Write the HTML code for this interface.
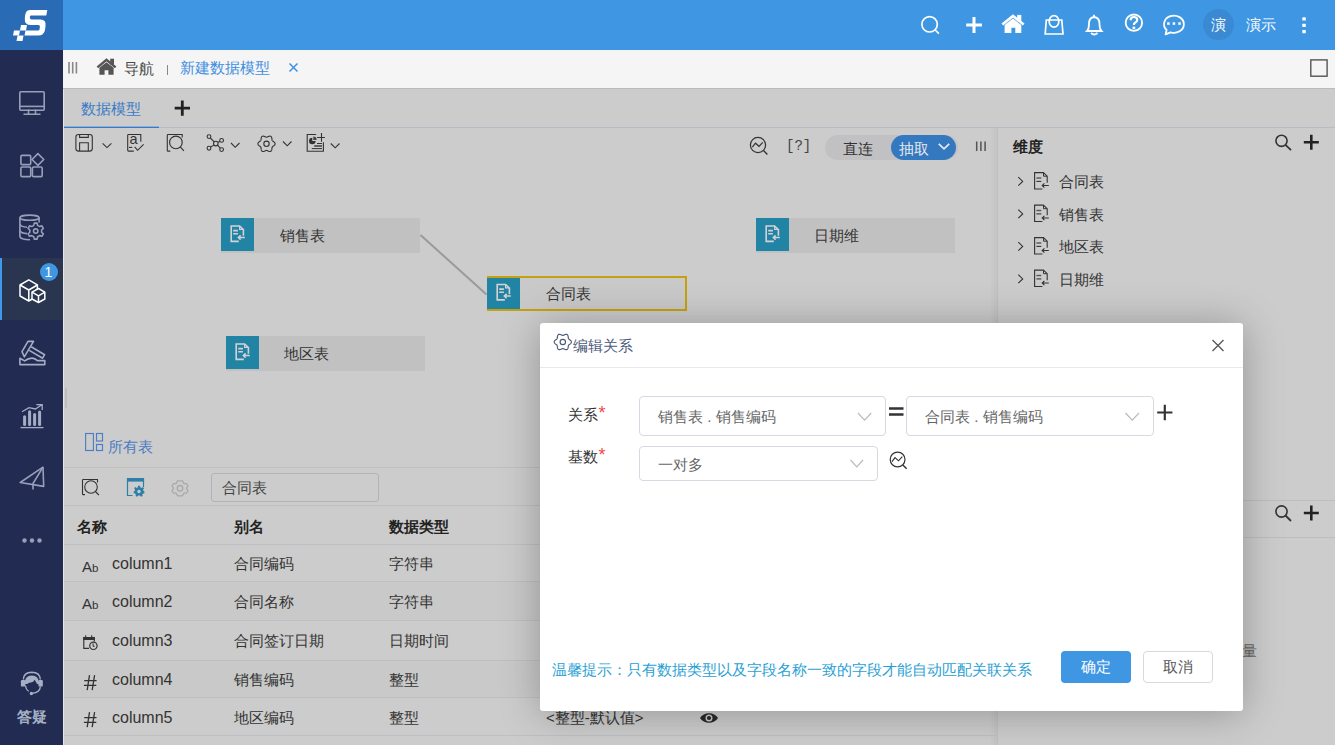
<!DOCTYPE html>
<html><head><meta charset="utf-8">
<style>
*{margin:0;padding:0;box-sizing:border-box}
html,body{width:1335px;height:745px;overflow:hidden;font-family:"Liberation Sans",sans-serif;font-size:15px;color:#333;background:#fff}
.a{position:absolute}
svg{position:absolute;overflow:visible}
#logo{left:0;top:0;width:63px;height:50px;background:#2a6bb6}
#hdr{left:63px;top:0;width:1272px;height:50px;background:#3f97e3}
#side{left:0;top:50px;width:63px;height:695px;background:#222b52}
#crumb{left:63px;top:50px;width:1272px;height:39px;background:#f5f5f5;border-bottom:1px solid #bbbbbb}
#main{left:63px;top:88px;width:1272px;height:657px;background:#fff;border-left:1px solid #e9e9e9}
#mask{left:63px;top:88px;width:1272px;height:657px;background:rgba(0,0,0,0.2)}
#modal{left:540px;top:323px;width:703px;height:388px;background:#fff;border-radius:3px;box-shadow:0 0 30px rgba(0,0,0,0.3)}
.t{position:absolute;white-space:nowrap;line-height:1}
</style></head><body>
<div id="logo" class="a">
<svg width="63" height="50" viewBox="0 0 63 50" style="left:0;top:0">
 <g fill="#fff">
  <path d="M29.5 10 L47.3 10 L46.3 15.5 L31 15.5 Q29.8 15.5 29.8 17 Q29.8 19.5 31.5 19.5 L40.5 19.5 Q46.5 19.5 45.5 26 L45 30 Q44 35.6 38 35.6 L24.5 35.6 L25.5 30.5 L38 30.5 Q39.5 30.5 39.6 29 L39.9 26.5 Q40 25 38.5 25 L31 25 Q24.5 25 24.8 19 L25 16 Q25.8 10 29.5 10 Z"/>
  <path d="M14 30.5 L20 30.5 L19 35.6 L13 35.6 Z"/>
  <path d="M21 25 L27 25 L26 30.5 L20 30.5 Z"/>
  <path d="M17.5 35.6 L23.5 35.6 L22.5 41 L16.5 41 Z"/>
 </g>
</svg>
</div>
<div id="hdr" class="a"></div>
<!-- header icons -->
<svg width="1335" height="50" style="left:0;top:0" fill="none" stroke="#fff" stroke-width="2">
 <circle cx="929.6" cy="24.3" r="7.7" stroke-width="1.7"/><path d="M935.2 30 L938.9 33.6" stroke-width="1.7"/>
 <path d="M974 17 V33 M966.2 25 H981.9" stroke-width="3"/>
 <path d="M1002.3 24.6 L1013 16 L1023.7 24.6" stroke-width="2.6" stroke-linejoin="miter"/>
 <path d="M1004.6 25 L1013 18.6 L1021.3 25 V33 H1015.3 V27.8 H1011.4 V33 H1004.6 Z" fill="#fff" stroke="none"/>
 <rect x="1017.2" y="14.9" width="4.1" height="6.5" fill="#fff" stroke="none"/>
 <path d="M1046.3 20 H1061.8 L1063 34 H1045.2 Z" stroke-width="1.7"/>
 <ellipse cx="1054" cy="21.4" rx="4.8" ry="5.8" stroke-width="1.7"/>
 <path d="M1087 31 Q1089 29 1089 24 Q1089 17.5 1094 17 Q1099.5 17.5 1099.5 24 Q1099.5 29 1101.5 31 Z" stroke-width="1.8"/>
 <path d="M1094 14.8 V17" stroke-width="1.8"/>
 <path d="M1091 33 Q1094.2 36 1097.5 33" stroke-width="1.8"/>
 <circle cx="1133.9" cy="22.7" r="8.2" stroke-width="1.9"/>
 <path d="M1130.6 20.3 Q1130.6 17 1133.9 17 Q1137.2 17 1137.2 19.9 Q1137.2 21.6 1135 22.8 Q1133.9 23.4 1133.9 25" stroke-width="2.2"/>
 <rect x="1132.6" y="26.6" width="2.6" height="2.6" fill="#fff" stroke="none"/>
 <path d="M1166.6 30 A9.9 8.6 0 1 1 1170.5 32.3 L1165.6 34.4 Z" stroke-width="1.8" stroke-linejoin="round"/>
 <rect x="1167.1" y="22.3" width="2.5" height="2.5" fill="#fff" stroke="none"/>
 <rect x="1172.7" y="22.3" width="2.5" height="2.5" fill="#fff" stroke="none"/>
 <rect x="1178.3" y="22.3" width="2.5" height="2.5" fill="#fff" stroke="none"/>
 <circle cx="1218.5" cy="24.5" r="15.5" fill="#3a89d2" stroke="none"/>
 <rect x="1302.3" y="17.3" width="3.5" height="3.3" rx="0.6" fill="#fff" stroke="none"/>
 <rect x="1302.3" y="23.7" width="3.5" height="3.3" rx="0.6" fill="#fff" stroke="none"/>
 <rect x="1302.3" y="30" width="3.5" height="3.3" rx="0.6" fill="#fff" stroke="none"/>
</svg>
<div class="t" style="left:1211px;top:17px;color:#fff;font-size:15px">演</div>
<div class="t" style="left:1246px;top:17px;color:#fff;font-size:15px">演示</div>
<div id="side" class="a"></div>
<div class="a" style="left:0;top:258px;width:63px;height:62px;background:#2a3550"></div>
<div class="a" style="left:0;top:258px;width:2px;height:62px;background:#3d9be9"></div>
<svg width="63" height="745" style="left:0;top:0" fill="none" stroke="#97a0b7" stroke-width="1.6">
 <!-- monitor -->
 <rect x="19.8" y="91.8" width="24.4" height="18.4" rx="1"/>
 <path d="M19.8 106.4 H44.2"/>
 <path d="M28.5 109.5 V114 M35.5 109.5 V114 M23.5 114.2 H40.5"/>
 <!-- apps -->
 <rect x="20.9" y="155.4" width="9.8" height="9.2" rx="1.2"/>
 <path d="M37.9 153.6 L43.8 159.5 L37.9 165.4 L32 159.5 Z" stroke-linejoin="round"/>
 <rect x="20.9" y="167" width="9.8" height="9.6" rx="1.2"/>
 <rect x="32.4" y="167" width="9.8" height="9.6" rx="1.2"/>
 <!-- db gear -->
 <ellipse cx="29.5" cy="217.7" rx="9.6" ry="2.6"/>
 <path d="M19.9 217.7 V236.5 Q20.5 239.6 30 239.8"/>
 <path d="M39.1 217.7 V222.5"/>
 <path d="M19.9 224.2 Q21 226.8 27 227.2 M19.9 230.6 Q21 233.2 27 233.6"/>
 <path d="M33.75 225.43 L34.29 223.12 L37.11 223.12 L37.65 225.43 L39.64 226.57 L41.90 225.89 L43.31 228.33 L41.59 229.96 L41.59 232.24 L43.31 233.87 L41.90 236.31 L39.64 235.63 L37.65 236.77 L37.11 239.08 L34.29 239.08 L33.75 236.77 L31.76 235.63 L29.50 236.31 L28.09 233.87 L29.81 232.24 L29.81 229.96 L28.09 228.33 L29.50 225.89 L31.76 226.57 Z" fill="#222b52" stroke-linejoin="round"/>
 <circle cx="35.7" cy="231.1" r="2.2"/>
 <!-- hammer -->
 <path d="M19.9 358.3 L24.6 360.9 Q28.5 358 32.2 358.1 Q35 358.3 37.4 360.6 H44.8 V364.6 H19.9 Z" stroke-linejoin="round" stroke="#a3adc4"/>
 <path d="M28 341.4 H33.5 L24.3 356.8 L22 351.6 Z" stroke-linejoin="round" stroke="#a3adc4"/>
 <path d="M31.2 346.8 L44.6 354.7 L42.6 358.2 L29.3 350.4" stroke-linejoin="round" stroke="#a3adc4"/>
 <!-- chart -->
 <path d="M20.5 427.6 H43.5" stroke-width="1.3" stroke="#a3adc4"/>
 <path d="M22 411.8 L29 407.6 L35.5 409 L41.8 404.8 M36.3 404.6 H42.2 V410" stroke-width="1.3" stroke="#a3adc4"/>
 <g stroke="none" fill="#a3adc4">
  <rect x="23.1" y="415.3" width="3" height="10.6" rx="1.5"/>
  <rect x="28.1" y="410.2" width="3" height="15.7" rx="1.5"/>
  <rect x="33.1" y="412.9" width="3" height="13" rx="1.5"/>
  <rect x="38.1" y="410.5" width="3" height="15.4" rx="1.5"/>
 </g>
 <!-- plane -->
 <path d="M43 467.2 L20.2 482.5 L43.7 486.4 Z" stroke-linejoin="round"/>
 <path d="M43 467.2 L33 483.5 V489.5"/>
 <!-- dots -->
 <g stroke="none" fill="#97a0b7">
  <circle cx="24.5" cy="540.5" r="2.2"/><circle cx="32" cy="540.5" r="2.2"/><circle cx="39.5" cy="540.5" r="2.2"/>
 </g>
 <!-- headset -->
 <path d="M23.4 679.5 Q23.5 672.4 31.8 672.2 Q40.1 672.4 40.3 679.5" stroke="#a6b0c5" stroke-width="1.4"/>
 <path d="M24.6 684 Q24.4 675.6 31.8 675.4 Q39.2 675.6 39.1 684 Z" fill="#a6b0c5" stroke="none"/>
 <path d="M26.4 685.5 Q27 682.8 31 682.5 Q33.6 682.2 34.6 679.8 Q37.5 683 37.4 687.2 Q37 691.2 32 691.3 Q27.3 691.1 26.4 685.5 Z" fill="#222b52" stroke="none"/>
 <rect x="20.9" y="680" width="4.4" height="6.6" rx="1.2" fill="#a6b0c5" stroke="none"/>
 <rect x="38.4" y="680" width="4.4" height="6.6" rx="1.2" fill="#a6b0c5" stroke="none"/>
 <path d="M25.6 685.5 Q25.9 689.8 28.8 691.2" stroke="#a6b0c5" stroke-width="1.2"/>
 <path d="M40.4 686.6 Q39.8 692.6 32.2 693.4" stroke="#a6b0c5" stroke-width="1.3"/>
 <circle cx="31.4" cy="693.5" r="1.7" fill="#a6b0c5" stroke="none"/>
</svg>
<div class="a" style="left:40px;top:263px;width:18px;height:18px;border-radius:50%;background:#3f97e3"></div>
<div class="t" style="left:44.5px;top:265px;color:#fff;font-size:14px">1</div>
<svg width="63" height="745" style="left:0;top:0" fill="none" stroke="#fff" stroke-width="1.5" stroke-linejoin="round">
 <path d="M20 285 L28.8 279.8 L37.4 284.8 L37.4 296 L28.8 301 L20 296 Z"/>
 <path d="M20 285 L28.8 290 L37.4 285 M28.8 290 V301"/>
 <path d="M32 292.2 L38.5 288.5 L44.8 292.2 V299 L38.5 302.5 L32 299 Z" fill="#2a3550"/>
 <path d="M32 292.2 L38.5 295.8 L44.8 292.2 M38.5 295.8 V302.5"/>
</svg>
<div class="t" style="left:17px;top:709px;color:#a7b1c5;font-size:15px;font-weight:bold">答疑</div>
<div id="crumb" class="a"></div>
<svg width="1335" height="90" style="left:0;top:0" fill="none">
 <path d="M69 62 V73.5 M72.7 62 V73.5 M76.4 62 V73.5" stroke="#888" stroke-width="1.6"/>
 <path d="M97.4 67.4 L106.5 59.8 L115.6 67.4" stroke="#555" stroke-width="2.4" stroke-linejoin="miter"/>
 <path d="M99.4 67.8 L106.5 62.2 L113.6 67.8 V74.8 H108.4 V70.3 H104.6 V74.8 H99.4 Z" fill="#555"/>
 <rect x="110.2" y="58.7" width="3.8" height="5.6" fill="#555"/>
 <path d="M167.5 65 V75" stroke="#888" stroke-width="1"/>
 <path d="M289.5 63.5 L297.5 71.5 M297.5 63.5 L289.5 71.5" stroke="#3f8fe0" stroke-width="1.5"/>
 <rect x="1310.8" y="59.9" width="16.3" height="16.3" stroke="#555" stroke-width="1.4"/>
</svg>
<div class="t" style="left:124px;top:60.5px;color:#4a4a4a">导航</div>
<div class="t" style="left:180px;top:60px;color:#3f8fe0">新建数据模型</div>
<div class="a" style="left:63px;top:89px;width:1272px;height:656px;background:#cccccc"></div>
<div class="a" style="left:63px;top:89px;width:1px;height:656px;background:#e6e6e6"></div>
<!-- tab bar -->
<div class="a" style="left:64px;top:127px;width:1271px;height:1px;background:#b9bcc4"></div>
<div class="a" style="left:64px;top:126px;width:95px;height:1px;background:#8fb0d6"></div><div class="a" style="left:64px;top:127px;width:95px;height:1px;background:#3a7bc6"></div>
<div class="t" style="left:81px;top:101px;color:#3a7bc6">数据模型</div>
<svg width="1335" height="745" style="left:0;top:0" fill="none" stroke="#333" stroke-width="1.5">
 <path d="M182.3 100.5 V115.8 M174.7 108.2 H190" stroke="#222" stroke-width="2.8"/>
 <!-- save -->
 <rect x="75.9" y="134.5" width="16.4" height="16.6" rx="2.6" stroke-width="1.1"/>
 <path d="M79.6 134.5 V137.4 H88.3 V134.5 M79.6 151.1 V142.7 H88.3 V151.1" stroke-width="1.1"/>
 <path d="M102.6 143.4 L107 147.6 L111.4 143.4" stroke-width="1.1"/>
 <!-- spellcheck -->
 <path d="M133.8 151.1 H128.5 Q127.7 151.1 127.7 150.3 V135.3 Q127.7 134.5 128.5 134.5 H140.8 V141.7" stroke-width="1.1"/>
 <path d="M129 147.4 H132.3" stroke-width="1.1"/>
 <path d="M134.7 146.9 L137.6 150.3 L143.6 144.3" stroke-width="1.1"/>
 <text x="129.4" y="144.3" font-size="14.5" fill="#333" stroke="none" font-family="Liberation Sans">a</text>
 <!-- search-square -->
 <path d="M170.3 151.1 H168 Q167.3 151.1 167.3 150.4 V135.2 Q167.3 134.5 168 134.5 H182.2 V137.6" stroke-width="1.1"/>
 <circle cx="175.9" cy="142.4" r="6.3" stroke-width="1.15"/>
 <path d="M180.3 146.8 L183.9 150.8" stroke-width="1.15"/>
 <!-- network -->
 <g stroke-width="1.1">
  <circle cx="209" cy="136.6" r="1.9"/><circle cx="221.6" cy="140.4" r="1.9"/><circle cx="209" cy="148.2" r="1.9"/><circle cx="221.6" cy="149.6" r="1.9"/>
  <circle cx="215.8" cy="143.6" r="2.3"/>
  <path d="M210.4 138 L214.2 141.9 M219.9 141.2 L218 142.4 M210.6 147 L213.8 145.1 M220.2 148.2 L217.6 145.2"/>
 </g>
 <path d="M231 143 L235.2 147.3 L239.5 143" stroke-width="1.1"/>
 <!-- gear -->
 <path d="M275.10 143.80 L275.04 144.25 L274.86 144.68 L274.59 145.08 L274.24 145.44 L273.84 145.77 L273.43 146.05 L273.05 146.31 L272.70 146.56 L272.42 146.82 L272.22 147.10 L272.08 147.42 L271.99 147.79 L271.95 148.21 L271.92 148.68 L271.87 149.17 L271.79 149.68 L271.65 150.16 L271.44 150.60 L271.16 150.97 L270.80 151.25 L270.38 151.42 L269.92 151.48 L269.43 151.44 L268.94 151.32 L268.47 151.14 L268.02 150.93 L267.60 150.73 L267.21 150.55 L266.85 150.44 L266.50 150.40 L266.15 150.44 L265.79 150.55 L265.40 150.73 L264.98 150.93 L264.53 151.14 L264.06 151.32 L263.57 151.44 L263.08 151.48 L262.62 151.42 L262.20 151.25 L261.84 150.97 L261.56 150.60 L261.35 150.16 L261.21 149.68 L261.13 149.17 L261.08 148.68 L261.05 148.21 L261.01 147.79 L260.92 147.42 L260.78 147.10 L260.58 146.82 L260.30 146.56 L259.95 146.31 L259.57 146.05 L259.16 145.77 L258.76 145.44 L258.41 145.08 L258.14 144.68 L257.96 144.25 L257.90 143.80 L257.96 143.35 L258.14 142.92 L258.41 142.52 L258.76 142.16 L259.16 141.83 L259.57 141.55 L259.95 141.29 L260.30 141.04 L260.58 140.78 L260.78 140.50 L260.92 140.18 L261.01 139.81 L261.05 139.39 L261.08 138.92 L261.13 138.43 L261.21 137.92 L261.35 137.44 L261.56 137.00 L261.84 136.63 L262.20 136.35 L262.62 136.18 L263.08 136.12 L263.57 136.16 L264.06 136.28 L264.53 136.46 L264.98 136.67 L265.40 136.87 L265.79 137.05 L266.15 137.16 L266.50 137.20 L266.85 137.16 L267.21 137.05 L267.60 136.87 L268.02 136.67 L268.47 136.46 L268.94 136.28 L269.43 136.16 L269.92 136.12 L270.38 136.18 L270.80 136.35 L271.16 136.63 L271.44 137.00 L271.65 137.44 L271.79 137.92 L271.87 138.43 L271.92 138.92 L271.95 139.39 L271.99 139.81 L272.08 140.18 L272.22 140.50 L272.42 140.78 L272.70 141.04 L273.05 141.29 L273.43 141.55 L273.84 141.83 L274.24 142.16 L274.59 142.52 L274.86 142.92 L275.04 143.35 Z" stroke-width="1.1" stroke-linejoin="round"/>
 <circle cx="266.5" cy="143.8" r="2.7" stroke-width="1.1"/>
 <path d="M283 141.5 L287.2 145.8 L291.5 141.5" stroke-width="1.1"/>
 <!-- report -->
 <path d="M316.2 134.5 H307.2 V151.3 H323.4 V142.3" stroke-width="1.1"/>
 <path d="M321.5 133 V141.7 M317.1 137.5 H324.9" stroke-width="1.1"/>
 <path d="M312.3 137.7 A3.3 3.3 0 1 0 315.6 141 H312.3 Z" fill="#333" stroke="none"/>
 <path d="M313.3 136.6 A3.3 3.3 0 0 1 316.6 139.9 H313.3 Z" fill="#444" stroke="none"/>
 <path d="M317 143.5 H322" stroke-width="1"/>
 <path d="M314.2 146 H322" stroke="#555" stroke-width="1.8"/>
 <path d="M311.8 148.6 H322" stroke-width="1"/>
 <path d="M330.8 143.5 L335.2 147.8 L339.5 143.5" stroke-width="1.1"/>
 <!-- right toolbar -->
 <circle cx="758" cy="145" r="7.6" stroke-width="1.25"/>
 <path d="M763.5 150.6 L767.4 154.6" stroke-width="1.4"/>
 <path d="M752.3 147.2 L755.5 143.2 L759 146.3 L762.8 142.4" stroke-width="1.2"/>
 <path d="M976.7 141.5 V151 M980.9 141.5 V151 M985.1 141.5 V151" stroke="#555" stroke-width="1.5"/>
</svg>
<div class="t" style="left:786px;top:139px;font-family:'Liberation Mono',monospace;font-size:14px;color:#444">[?]</div>
<div class="a" style="left:825px;top:135px;width:133px;height:25px;border-radius:13px;background:#c1c1c3"></div>
<div class="a" style="left:891px;top:135px;width:65px;height:25px;border-radius:13px;background:#3478bf"></div>
<div class="t" style="left:843px;top:141px;color:#333">直连</div>
<div class="t" style="left:899px;top:141px;color:#e4e8ee">抽取</div>
<svg width="1335" height="745" style="left:0;top:0" fill="none"><path d="M938.8 143.8 L944 148.8 L949.2 143.8" stroke="#e4e8ee" stroke-width="1.8"/></svg>
<!-- right panel -->
<div class="a" style="left:990px;top:128px;width:7px;height:617px;background:linear-gradient(to right,#cbcbcb,#c4c4c4)"></div>
<div class="a" style="left:997px;top:128px;width:1px;height:617px;background:#c0c0c0"></div>
<div class="t" style="left:1013px;top:139px;color:#222;font-weight:bold">维度</div>
<div class="t" style="left:1059px;top:174px;color:#333">合同表</div>
<div class="t" style="left:1059px;top:207px;color:#333">销售表</div>
<div class="t" style="left:1059px;top:239px;color:#333">地区表</div>
<div class="t" style="left:1059px;top:272px;color:#333">日期维</div>
<svg width="1335" height="745" style="left:0;top:0" fill="none" stroke="#333" stroke-width="1.4">
 <circle cx="1281.5" cy="140.8" r="5.6" stroke-width="1.6"/><path d="M1285.5 144.8 L1291 150.2" stroke-width="1.8"/>
 <path d="M1311.3 134.8 V149.8 M1303.8 142.3 H1318.8" stroke="#222" stroke-width="2.6"/>
 <g id="tr">
 <path d="M1018.3 177.2 L1022.7 181.4 L1018.3 185.6" stroke-width="1.1"/>
 <path d="M1042.4 189 H1034.6 V172.6 H1043.4 L1047.2 176.2 V182.7" stroke-width="1.1"/>
 <path d="M1043.5 172.8 V176.2 H1047" stroke-width="1"/>
 <path d="M1036.4 178 H1041.3" stroke="#555" stroke-width="1.4"/>
 <path d="M1036.4 181.4 H1041.3" stroke-width="1.1"/>
 <path d="M1048.8 185.5 H1042.2 M1044.4 183.3 L1042.2 185.5 L1044.4 187.7" stroke-width="1.1"/>
 </g>
 <use href="#tr" y="32.5"/><use href="#tr" y="65"/><use href="#tr" y="97.5"/>
</svg>
<div class="a" style="left:998px;top:500px;width:337px;height:1px;background:#bdbdbd"></div>
<div class="a" style="left:998px;top:537px;width:337px;height:1px;background:#bdbdbd"></div>
<svg width="1335" height="745" style="left:0;top:0" fill="none" stroke="#333">
 <circle cx="1281.5" cy="511.5" r="5.6" stroke-width="1.6"/><path d="M1285.5 515.5 L1291 521" stroke-width="1.8"/>
 <path d="M1311.3 505.5 V520.5 M1303.8 513 H1318.8" stroke="#222" stroke-width="2.6"/>
</svg>
<div class="t" style="left:1242px;top:643px;color:#666">量</div>
<!-- canvas nodes -->
<svg width="1335" height="745" style="left:0;top:0" fill="none"><path d="M420.5 235 L486.5 294.5" stroke="#9a9a9a" stroke-width="2"/></svg>
<div class="a" style="left:221px;top:218px;width:199px;height:35px;background:#c1c1c1"></div>
<div class="a" style="left:221px;top:218px;width:33px;height:33px;background:#2184a5"></div>
<div class="t" style="left:280px;top:228px;color:#333">销售表</div>
<div class="a" style="left:756px;top:218px;width:199px;height:35px;background:#c1c1c1"></div>
<div class="a" style="left:756px;top:218px;width:33px;height:33px;background:#2184a5"></div>
<div class="t" style="left:814px;top:228px;color:#333">日期维</div>
<div class="a" style="left:226px;top:336px;width:199px;height:35px;background:#c1c1c1"></div>
<div class="a" style="left:226px;top:336px;width:33px;height:33px;background:#2184a5"></div>
<div class="t" style="left:284px;top:346px;color:#333">地区表</div>
<div class="a" style="left:487px;top:276px;width:200px;height:35px;background:#c9c9c9"></div>
<div class="a" style="left:487px;top:277px;width:33px;height:33px;background:#2184a5"></div>
<div class="a" style="left:487px;top:276px;width:200px;height:35px;border:2px solid #c6a10f;border-left:0"></div>
<div class="t" style="left:546px;top:286px;color:#333">合同表</div>
<svg width="1335" height="745" style="left:0;top:0" fill="none" stroke="#d6d2d4" stroke-width="1.5">
 <g id="nd">
 <path d="M238.8 241.4 H231.2 V226 H239.6 L243.4 229.6 V235.8" stroke-width="1.6"/>
 <path d="M239.6 226.2 V229.4 H243" stroke-width="1.2"/>
 <path d="M233.2 230.6 H237.9 M233.2 233.8 H237.9" stroke-width="1.6"/>
 <path d="M244.8 237.6 H238.4 M240.6 235.4 L238.3 237.6 L240.6 239.8" stroke-width="1.5"/>
 </g>
 <use href="#nd" x="535"/><use href="#nd" x="5" y="118"/><use href="#nd" x="266" y="58.5"/>
</svg>
<!-- bottom panel -->
<div class="a" style="left:65px;top:388px;width:2px;height:20px;background:#bdbdbd"></div>
<svg width="1335" height="745" style="left:0;top:0" fill="none" stroke="#4a7ec8" stroke-width="1.15">
 <rect x="85.6" y="433.5" width="7.8" height="17"/>
 <rect x="96.5" y="433.5" width="6" height="7.5"/>
 <rect x="96.5" y="444.5" width="6" height="6"/>
</svg>
<div class="t" style="left:108px;top:439px;color:#4b7cc2">所有表</div>
<div class="a" style="left:64px;top:467px;width:476px;height:1px;background:#bfbfbf"></div>
<div class="a" style="left:64px;top:505px;width:476px;height:1px;background:#bfbfbf"></div>
<div class="a" style="left:64px;top:581px;width:933px;height:39px;background:#c9c9c9"></div>
<div class="a" style="left:64px;top:660px;width:933px;height:37px;background:#c9c9c9"></div>
<div class="a" style="left:64px;top:544px;width:933px;height:1px;background:#bebfc4"></div>
<div class="a" style="left:64px;top:581px;width:933px;height:1px;background:#bebfc4"></div>
<div class="a" style="left:64px;top:620px;width:933px;height:1px;background:#bebfc4"></div>
<div class="a" style="left:64px;top:660px;width:933px;height:1px;background:#bebfc4"></div>
<div class="a" style="left:64px;top:697px;width:933px;height:1px;background:#bebfc4"></div>
<div class="a" style="left:64px;top:735px;width:933px;height:1px;background:#bebfc4"></div>
<div class="a" style="left:210.5px;top:472.5px;width:168px;height:29px;border:1px solid #b3b3b6;border-radius:3px"></div>
<div class="t" style="left:222px;top:480px;color:#444">合同表</div>
<svg width="1335" height="745" style="left:0;top:0" fill="none" stroke="#333" stroke-width="1.5">
 <path d="M85 494.6 H83.2 Q82.5 494.6 82.5 493.9 V480.2 Q82.5 479.5 83.2 479.5 H97.5 V482.5" stroke-width="1.1"/>
 <circle cx="91" cy="487" r="6.3" stroke-width="1.1"/>
 <path d="M95.3 491.4 L98.8 495" stroke-width="1.2"/>
 <g stroke="#2e7fa8">
  <path d="M132.5 495.5 H127.5 V481 M143.5 481 V487" stroke-width="1.2"/>
  <rect x="126.9" y="478" width="17.2" height="3.6" fill="#2e7fa8" stroke="none"/>
 </g>
 <g transform="translate(139,491)" stroke="none" fill="#2e7fa8">
  <path d="M-1.2 -5.6 H1.2 L1.6 -3.8 L3.1 -3 L4.7 -4.1 L6.2 -2.6 L5 -1 L5.5 0.7 L6.6 1.3 V3.5 L4.9 3.9 L4 5.3 L4.4 7 L2.4 7.8 L1.3 6.3 H-1.1 L-2.2 7.8 L-4.2 7 L-3.8 5.3 L-4.7 3.9 L-6.4 3.5 V1.3 L-5.3 0.7 L-4.8 -1 L-6 -2.6 L-4.5 -4.1 L-2.9 -3 L-1.4 -3.8 Z" transform="scale(0.82) translate(0,-0.8)"/>
  <circle cx="0" cy="0.5" r="1.7" fill="#cbcbcb"/>
 </g>
 <g stroke="#a9a9a9" stroke-width="1.3">
  <path d="M177.5 480.8 H182.5 L183.8 483.5 L186.5 483.7 L188 486 L186.5 488.3 L188 490.6 L186.5 493 L183.8 493.2 L182.5 495.8 H177.5 L176.2 493.2 L173.5 493 L172 490.6 L173.5 488.3 L172 486 L173.5 483.7 L176.2 483.5 Z" stroke-linejoin="round"/>
  <circle cx="180" cy="488.3" r="2.8"/>
 </g>
</svg>
<div class="t" style="left:77px;top:519px;color:#222;font-weight:bold">名称</div>
<div class="t" style="left:234px;top:519px;color:#222;font-weight:bold">别名</div>
<div class="t" style="left:389px;top:519px;color:#222;font-weight:bold">数据类型</div>
<div class="t" style="left:112px;top:556px;color:#333;font-size:16px">column1</div>
<div class="t" style="left:112px;top:594px;color:#333;font-size:16px">column2</div>
<div class="t" style="left:112px;top:633px;color:#333;font-size:16px">column3</div>
<div class="t" style="left:112px;top:672px;color:#333;font-size:16px">column4</div>
<div class="t" style="left:112px;top:710px;color:#333;font-size:16px">column5</div>
<div class="t" style="left:234px;top:556px;color:#333">合同编码</div>
<div class="t" style="left:234px;top:594px;color:#333">合同名称</div>
<div class="t" style="left:234px;top:633px;color:#333">合同签订日期</div>
<div class="t" style="left:234px;top:672px;color:#333">销售编码</div>
<div class="t" style="left:234px;top:710px;color:#333">地区编码</div>
<div class="t" style="left:389px;top:556px;color:#333">字符串</div>
<div class="t" style="left:389px;top:594px;color:#333">字符串</div>
<div class="t" style="left:389px;top:633px;color:#333">日期时间</div>
<div class="t" style="left:389px;top:672px;color:#333">整型</div>
<div class="t" style="left:389px;top:710px;color:#333">整型</div>
<div class="t" style="left:82px;top:558.5px;color:#333;font-size:15px">A<span style="font-size:11.5px">b</span></div>
<div class="t" style="left:82px;top:595.5px;color:#333;font-size:15px">A<span style="font-size:11.5px">b</span></div>


<svg width="1335" height="745" style="left:0;top:0" fill="none" stroke="#333" stroke-width="1.4">
 <path d="M89 648.4 H83.8 V637.6 H94.3 V641.6" stroke-width="1.15"/>
 <rect x="83.2" y="637" width="11.7" height="3" fill="#333" stroke="none"/>
 <path d="M85.7 635.2 V637.5 M91.7 635.2 V637.5" stroke-width="1.1"/>
 <circle cx="93.4" cy="645.8" r="3.7" fill="#cccccc" stroke-width="1.2"/>
 <path d="M93.1 643.4 V646.3 H94.6" stroke-width="1"/>
</svg>
<svg width="1335" height="745" style="left:0;top:0" fill="none" stroke="#333" stroke-width="1.3">
 <g id="hs"><path d="M84.2 680.6 H96.6 M83.9 685.3 H96.3" stroke-width="1.2"/><path d="M89.5 675.2 L87.2 690.2 M94.6 675.2 L92.2 690.2"/></g>
 <use href="#hs" y="37"/>
</svg>
<div class="t" style="left:546px;top:710px;color:#333">&lt;整型-默认值&gt;</div>
<svg width="1335" height="745" style="left:0;top:0"><path d="M700 718 C703.5 711.6 714.5 711.6 718 718 C714.5 724.4 703.5 724.4 700 718 Z" fill="#2a2a2a"/><circle cx="709" cy="718" r="3.5" fill="#cccccc"/><circle cx="709" cy="718" r="2.1" fill="#2a2a2a"/></svg>
<!-- modal -->
<div class="a" style="left:540px;top:323px;width:703px;height:388px;background:#fff;border-radius:3px;box-shadow:0 2px 40px rgba(0,0,0,0.28)"></div>
<div class="a" style="left:540px;top:367px;width:703px;height:1px;background:#e8e8ec"></div>
<svg width="1335" height="745" style="left:0;top:0" fill="none" stroke="#4c5b7c" stroke-width="1.3">
 <path d="M571.40 342.00 L571.34 342.45 L571.16 342.88 L570.89 343.28 L570.54 343.64 L570.14 343.97 L569.73 344.25 L569.35 344.51 L569.00 344.76 L568.72 345.02 L568.52 345.30 L568.38 345.62 L568.29 345.99 L568.25 346.41 L568.22 346.88 L568.17 347.37 L568.09 347.88 L567.95 348.36 L567.74 348.80 L567.46 349.17 L567.10 349.45 L566.68 349.62 L566.22 349.68 L565.73 349.64 L565.24 349.52 L564.77 349.34 L564.32 349.13 L563.90 348.93 L563.51 348.75 L563.15 348.64 L562.80 348.60 L562.45 348.64 L562.09 348.75 L561.70 348.93 L561.28 349.13 L560.83 349.34 L560.36 349.52 L559.87 349.64 L559.38 349.68 L558.92 349.62 L558.50 349.45 L558.14 349.17 L557.86 348.80 L557.65 348.36 L557.51 347.88 L557.43 347.37 L557.38 346.88 L557.35 346.41 L557.31 345.99 L557.22 345.62 L557.08 345.30 L556.88 345.02 L556.60 344.76 L556.25 344.51 L555.87 344.25 L555.46 343.97 L555.06 343.64 L554.71 343.28 L554.44 342.88 L554.26 342.45 L554.20 342.00 L554.26 341.55 L554.44 341.12 L554.71 340.72 L555.06 340.36 L555.46 340.03 L555.87 339.75 L556.25 339.49 L556.60 339.24 L556.88 338.98 L557.08 338.70 L557.22 338.38 L557.31 338.01 L557.35 337.59 L557.38 337.12 L557.43 336.63 L557.51 336.12 L557.65 335.64 L557.86 335.20 L558.14 334.83 L558.50 334.55 L558.92 334.38 L559.38 334.32 L559.87 334.36 L560.36 334.48 L560.83 334.66 L561.28 334.87 L561.70 335.07 L562.09 335.25 L562.45 335.36 L562.80 335.40 L563.15 335.36 L563.51 335.25 L563.90 335.07 L564.32 334.87 L564.77 334.66 L565.24 334.48 L565.73 334.36 L566.22 334.32 L566.68 334.38 L567.10 334.55 L567.46 334.83 L567.74 335.20 L567.95 335.64 L568.09 336.12 L568.17 336.63 L568.22 337.12 L568.25 337.59 L568.29 338.01 L568.38 338.38 L568.52 338.70 L568.72 338.98 L569.00 339.24 L569.35 339.49 L569.73 339.75 L570.14 340.03 L570.54 340.36 L570.89 340.72 L571.16 341.12 L571.34 341.55 Z" stroke-width="1.15"/><circle cx="562.8" cy="342" r="2.7" stroke-width="1.15"/>
 <path d="M1212.5 340 L1223.5 351 M1223.5 340 L1212.5 351" stroke="#555" stroke-width="1.3"/>
</svg>
<div class="t" style="left:573px;top:338px;color:#4c5b7c">编辑关系</div>
<div class="t" style="left:568px;top:405px;color:#333">关系<span style="color:#f0494a;font-size:18px;position:relative;top:-1px;left:0.5px">*</span></div>
<div class="t" style="left:568px;top:447px;color:#333">基数<span style="color:#f0494a;font-size:18px;position:relative;top:-1px;left:0.5px">*</span></div>
<div class="a" style="left:639px;top:396px;width:247px;height:40px;border:1px solid #d8d8e2;border-radius:4px"></div>
<div class="a" style="left:906px;top:396px;width:248px;height:40px;border:1px solid #d8d8e2;border-radius:4px"></div>
<div class="a" style="left:639px;top:446px;width:239px;height:35px;border:1px solid #d8d8e2;border-radius:4px"></div>
<div class="t" style="left:658px;top:409px;color:#666">销售表 . 销售编码</div>
<div class="t" style="left:925px;top:409px;color:#666">合同表 . 销售编码</div>
<div class="t" style="left:658px;top:457px;color:#666">一对多</div>
<svg width="1335" height="745" style="left:0;top:0" fill="none" stroke="#bbb" stroke-width="1.2">
 <path d="M858 413 L864.6 420.2 L871.2 413"/>
 <path d="M1125.5 413 L1132.2 420.2 L1139 413"/>
 <path d="M850.5 460 L856.8 466.8 L863 460"/>
 <path d="M889 408.5 H903.5 M889 414.5 H903.5" stroke="#333" stroke-width="2.6"/>
 <path d="M1164.8 404.8 V420.3 M1157.2 412.5 H1172.4" stroke="#333" stroke-width="2.2"/>
 <circle cx="897.6" cy="459.5" r="7.4" stroke="#333" stroke-width="1.2"/>
 <path d="M902.9 464.9 L906.6 468.8" stroke="#333" stroke-width="1.4"/>
 <path d="M892 461.6 L895 457.6 L898.5 460.8 L902.3 456.6" stroke="#333" stroke-width="1.15"/>
</svg>
<div class="t" style="left:552px;top:662px;color:#2b9fd4">温馨提示：只有数据类型以及字段名称一致的字段才能自动匹配关联关系</div>
<div class="a" style="left:1061px;top:651px;width:70px;height:32px;background:#3f97e3;border-radius:4px"></div>
<div class="t" style="left:1081px;top:659px;color:#fff">确定</div>
<div class="a" style="left:1143px;top:651px;width:70px;height:32px;border:1px solid #d9d9d9;border-radius:4px"></div>
<div class="t" style="left:1163px;top:659px;color:#555">取消</div>
</body></html>
